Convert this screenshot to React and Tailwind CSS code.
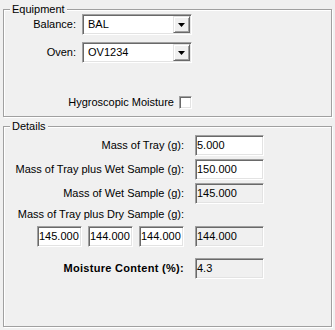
import React from "react";

const sunken =
  "border border-t-[#a0a0a0] border-l-[#a0a0a0] border-b-white border-r-white shadow-[inset_1px_1px_0_#696969,inset_-1px_-1px_0_#e3e3e3]";

function Arrow() {
  return (
    <svg width="7" height="4" viewBox="0 0 7 4">
      <polygon points="0,0 7,0 3.5,4" fill="#000" />
    </svg>
  );
}

function Combo({ value }) {
  return (
    <div className={`h-[21px] w-[110px] bg-white flex items-center ${sunken} p-[1px]`}>
      <span className="flex-1 pl-[4px] leading-[13px]">{value}</span>
      <div className="h-[17px] w-[17px] bg-[#f0f0f0] flex items-center justify-center border border-t-[#e3e3e3] border-l-[#e3e3e3] border-b-[#696969] border-r-[#696969] shadow-[inset_1px_1px_0_#fff,inset_-1px_-1px_0_#a0a0a0]">
        <Arrow />
      </div>
    </div>
  );
}

function Field({ value, readOnly, w = "w-[69px]" }) {
  return (
    <div
      className={`h-[21px] ${w} ${readOnly ? "bg-[#f0f0f0]" : "bg-white"} flex items-center pl-[1px] ${sunken}`}
    >
      <span className="leading-[13px]">{value}</span>
    </div>
  );
}

function Row({ label, children, bold }) {
  return (
    <div className="flex items-center gap-[11px] h-[21px]">
      <span className={`w-[180px] text-right leading-[13px] ${bold ? "font-bold tracking-[0.3px]" : ""}`}>{label}</span>
      {children}
    </div>
  );
}

const fieldsetCls =
  "w-[329px] border border-[#a0a0a0] shadow-[inset_1px_1px_0_#fff,1px_1px_0_#fff] m-0 p-0 min-w-0";
const legendCls = "ml-[6px] px-[2px] leading-[13px] bg-[#f0f0f0]";

export default function App() {
  return (
    <div className="w-[335px] h-[330px] bg-[#f0f0f0] text-[11px] text-black pt-[3px] pl-[3px] font-['Liberation_Sans',Arial,sans-serif] overflow-hidden">
      <fieldset className={`${fieldsetCls} h-[114px]`}>
        <legend className={legendCls}>Equipment</legend>
        <div className="-mt-[2px] grid grid-cols-[72px_110px] gap-x-[6px] gap-y-[7px] items-center">
          <span className="text-right leading-[13px]">Balance:</span>
          <Combo value="BAL" />
          <span className="text-right leading-[13px]">Oven:</span>
          <Combo value="OV1234" />
        </div>
        <div className="mt-[33px] w-[188px] flex justify-end items-center gap-[5px]">
          <span className="leading-[13px]">Hygroscopic Moisture</span>
          <div className={`w-[13px] h-[13px] bg-white ${sunken}`} />
        </div>
      </fieldset>

      <fieldset className={`${fieldsetCls} h-[207px] mt-[3px]`}>
        <legend className={legendCls}>Details</legend>
        <div className="flex flex-col">
          <div className="mt-[2px]">
            <Row label="Mass of Tray (g):">
              <Field value="5.000" />
            </Row>
          </div>
          <div className="mt-[3px]">
            <Row label="Mass of Tray plus Wet Sample (g):">
              <Field value="150.000" />
            </Row>
          </div>
          <div className="mt-[3px]">
            <Row label="Mass of Wet Sample (g):">
              <Field value="145.000" readOnly />
            </Row>
          </div>
          <div className="mt-[4px] w-[180px] text-right leading-[13px]">
            Mass of Tray plus Dry Sample (g):
          </div>
          <div className="mt-[5px] pl-[33px] flex items-center gap-[6px]">
            <Field value="145.000" w="w-[45px]" />
            <Field value="144.000" w="w-[45px]" />
            <Field value="144.000" w="w-[45px]" />
            <div className="ml-[5px]">
              <Field value="144.000" readOnly />
            </div>
          </div>
          <div className="mt-[11px]">
            <Row label="Moisture Content (%):" bold>
              <Field value="4.3" readOnly />
            </Row>
          </div>
        </div>
      </fieldset>
    </div>
  );
}
